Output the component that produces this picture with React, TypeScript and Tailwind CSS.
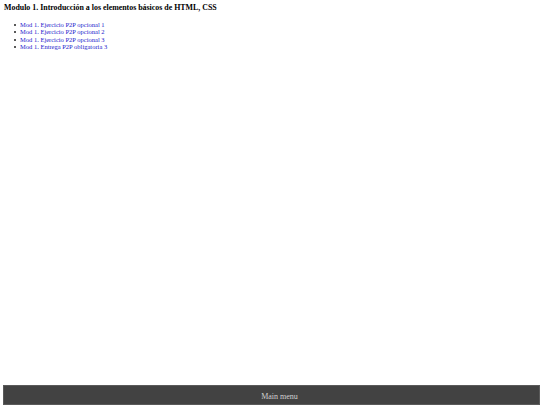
const items = [
  "Mod 1. Ejercicio P2P opcional 1",
  "Mod 1. Ejercicio P2P opcional 2",
  "Mod 1. Ejercicio P2P opcional 3",
  "Mod 1. Entrega P2P obligatoria 3",
];

export default function App() {
  return (
    <div className="flex h-[405px] w-[540px] flex-col bg-white font-['Liberation_Serif',serif] text-black">
      <div className="flex-1 px-[4px] pt-[3px]">
        <h3 className="text-[7.9px] leading-[10px] font-bold">
          Modulo 1. Introducción a los elementos básicos de HTML, CSS
        </h3>
        <ul className="mt-[8px] pl-[10px] text-[6.5px] leading-[7.4px]">
          {items.map((t) => (
            <li key={t} className="flex items-center">
              <span className="mr-[4px] h-[2px] w-[2px] rounded-full bg-[#222]" />
              <a href="#" className="text-[#1a1acc]">
                {t}
              </a>
            </li>
          ))}
        </ul>
      </div>
      <div className="ml-[3px] flex h-[20px] items-center justify-center border border-[#5a5a5a] bg-[#424242] pl-[16px] pt-[3px] text-[8px] text-[#d0d0d0]">
        Main menu
      </div>
    </div>
  );
}
